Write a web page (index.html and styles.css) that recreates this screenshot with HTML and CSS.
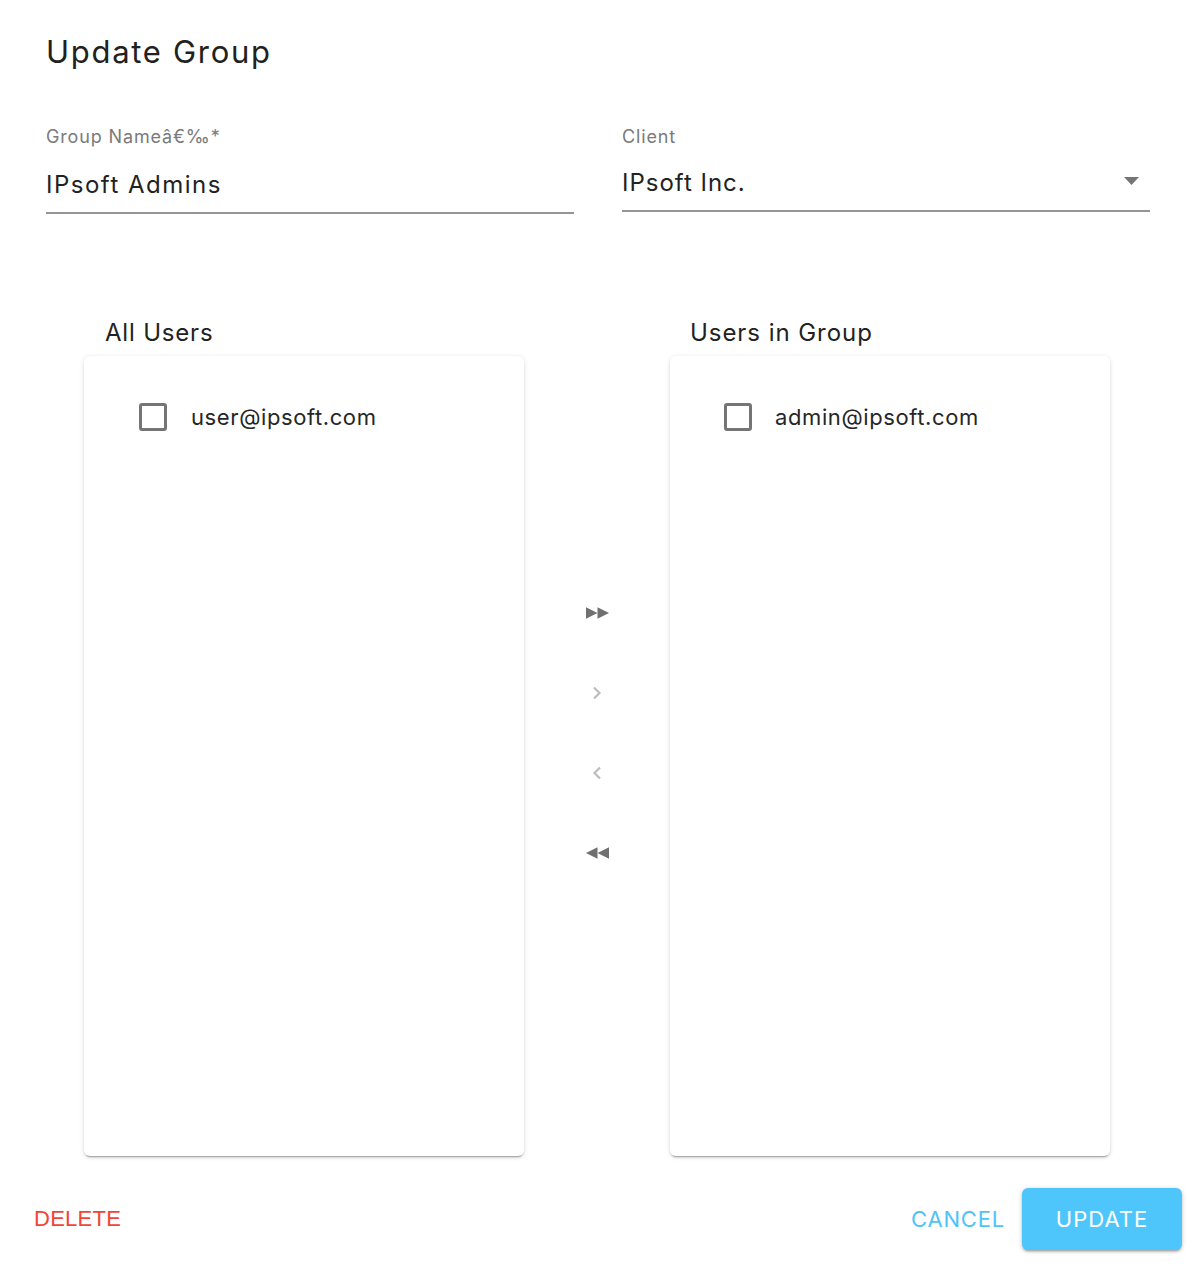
FILE: index.html
```html
<!DOCTYPE html>
<html>
<head>
<meta charset="utf-8">
<title>Update Group</title>
<link rel="stylesheet" href="styles.css">
</head>
<body>
<div class="dialog">
  <h2 class="title">Update Group</h2>

  <div class="fields">
    <div class="field">
      <label class="field-label">Group Nameâ€‰*</label>
      <div class="input">IPsoft Admins</div>
    </div>
    <div class="field">
      <label class="field-label">Client</label>
      <div class="input select">
        <span>IPsoft Inc.</span>
        <svg class="caret" width="15" height="8" viewBox="0 0 15 8"><polygon points="0,0 15,0 7.5,8" fill="#757575"/></svg>
      </div>
    </div>
  </div>

  <div class="transfer">
    <div class="column">
      <div class="list-title">All Users</div>
      <div class="card">
        <div class="item">
          <span class="checkbox"></span>
          <span class="item-text">user@ipsoft.com</span>
        </div>
      </div>
    </div>

    <div class="controls">
      <button class="ctrl" aria-label="Move all right">
        <svg width="23" height="12" viewBox="0 0 22 11"><polygon points="0,0 11,5.5 0,11" fill="#707070"/><polygon points="11,0 22,5.5 11,11" fill="#707070"/></svg>
      </button>
      <button class="ctrl" aria-label="Move selected right">
        <svg width="10" height="14" viewBox="0 0 10 14"><polyline points="2,1.5 7.5,7 2,12.5" fill="none" stroke="#bdbdbd" stroke-width="2.2"/></svg>
      </button>
      <button class="ctrl" aria-label="Move selected left">
        <svg width="10" height="14" viewBox="0 0 10 14"><polyline points="8,1.5 2.5,7 8,12.5" fill="none" stroke="#bdbdbd" stroke-width="2.2"/></svg>
      </button>
      <button class="ctrl" aria-label="Move all left">
        <svg width="23" height="12" viewBox="0 0 22 11"><polygon points="11,0 0,5.5 11,11" fill="#707070"/><polygon points="22,0 11,5.5 22,11" fill="#707070"/></svg>
      </button>
    </div>

    <div class="column">
      <div class="list-title right">Users in Group</div>
      <div class="card right">
        <div class="item">
          <span class="checkbox"></span>
          <span class="item-text">admin@ipsoft.com</span>
        </div>
      </div>
    </div>
  </div>

  <div class="actions">
    <button class="btn-delete">DELETE</button>
    <div class="actions-right">
      <button class="btn-cancel">CANCEL</button>
      <button class="btn-update">UPDATE</button>
    </div>
  </div>
</div>
</body>
</html>
```
FILE: styles.css
```css
* { box-sizing: border-box; }

html, body {
  margin: 0;
  padding: 0;
  background: #ffffff;
}

body {
  font-family: "Inter", "Noto Sans", sans-serif;
  color: rgba(0, 0, 0, 0.87);
}

.dialog {
  width: 1196px;
  min-height: 1264px;
  padding: 32px 46px 0 46px;
  display: flex;
  flex-direction: column;
}

.title {
  margin: 0;
  font-size: 31px;
  line-height: 40px;
  font-weight: 400;
  letter-spacing: 1.7px;
  color: #212121;
}

.fields {
  margin-top: 54px;
  display: grid;
  grid-template-columns: 528px 528px;
  column-gap: 48px;
}

.field {
  display: flex;
  flex-direction: column;
}

.field-label {
  font-size: 18px;
  line-height: 22px;
  letter-spacing: 0.85px;
  color: #7a7a7a;
}

.input {
  margin-top: 21px;
  font-size: 24px;
  line-height: 32px;
  letter-spacing: 1.5px;
  color: #222222;
  padding-bottom: 11px;
  border-bottom: 2px solid #959595;
}

.select {
  margin-top: 19px;
  display: flex;
  align-items: center;
  justify-content: space-between;
  padding-right: 11px;
  letter-spacing: 1px;
}

.caret {
  display: block;
  margin-top: -4px;
}

.transfer {
  margin: 104px 0 0 38px;
  display: grid;
  grid-template-columns: 440px 146px 440px;
}

.column {
  display: flex;
  flex-direction: column;
}

.list-title {
  font-size: 24px;
  line-height: 30px;
  letter-spacing: 0.8px;
  color: #222222;
  padding-left: 21px;
}

.list-title.right {
  padding-left: 20px;
  letter-spacing: 0.95px;
}

.card {
  margin-top: 8px;
  height: 800px;
  background: #ffffff;
  border-radius: 6px;
  box-shadow: 0 1px 5px rgba(0, 0, 0, 0.12), 0 2px 2px rgba(0, 0, 0, 0.10), 0 3px 1px -2px rgba(0, 0, 0, 0.22);
  padding: 47px 0 0 55px;
}

.card.right {
  padding-left: 54px;
}

.item {
  display: flex;
  align-items: center;
  height: 28px;
}

.checkbox {
  width: 28px;
  height: 28px;
  border: 3px solid #757575;
  border-radius: 3px;
  flex: none;
}

.item-text {
  margin-left: 24px;
  font-size: 22px;
  letter-spacing: 0.6px;
  color: #262626;
}

.card.right .item-text {
  margin-left: 23px;
}

.controls {
  display: flex;
  flex-direction: column;
  align-items: center;
  justify-content: center;
  padding-bottom: 8px;
}

.ctrl {
  width: 60px;
  height: 80px;
  border: none;
  background: transparent;
  padding: 0;
  display: flex;
  align-items: center;
  justify-content: center;
}

.ctrl svg { display: block; }

.actions {
  margin: 32px -32px 0 -12px;
  display: flex;
  align-items: center;
  justify-content: space-between;
}

.actions-right {
  display: flex;
  align-items: center;
}

button {
  font-family: inherit;
  cursor: pointer;
}

.btn-delete {
  border: none;
  background: transparent;
  font-family: "Liberation Sans", Arial, sans-serif;
  font-size: 22px;
  letter-spacing: 0.25px;
  color: #f44336;
  padding: 9px 0;
}

.btn-cancel {
  border: none;
  background: transparent;
  font-size: 22px;
  letter-spacing: 0.8px;
  color: #4fc3f7;
  padding: 9px 0;
  margin-right: 17px;
}

.btn-update {
  border: none;
  width: 160px;
  height: 62px;
  border-radius: 6px;
  background: #4fc6fb;
  color: #ffffff;
  font-size: 22px;
  letter-spacing: 1px;
  box-shadow: 0 1px 5px rgba(0, 0, 0, 0.2), 0 2px 2px rgba(0, 0, 0, 0.14), 0 3px 1px -2px rgba(0, 0, 0, 0.12);
}
```
